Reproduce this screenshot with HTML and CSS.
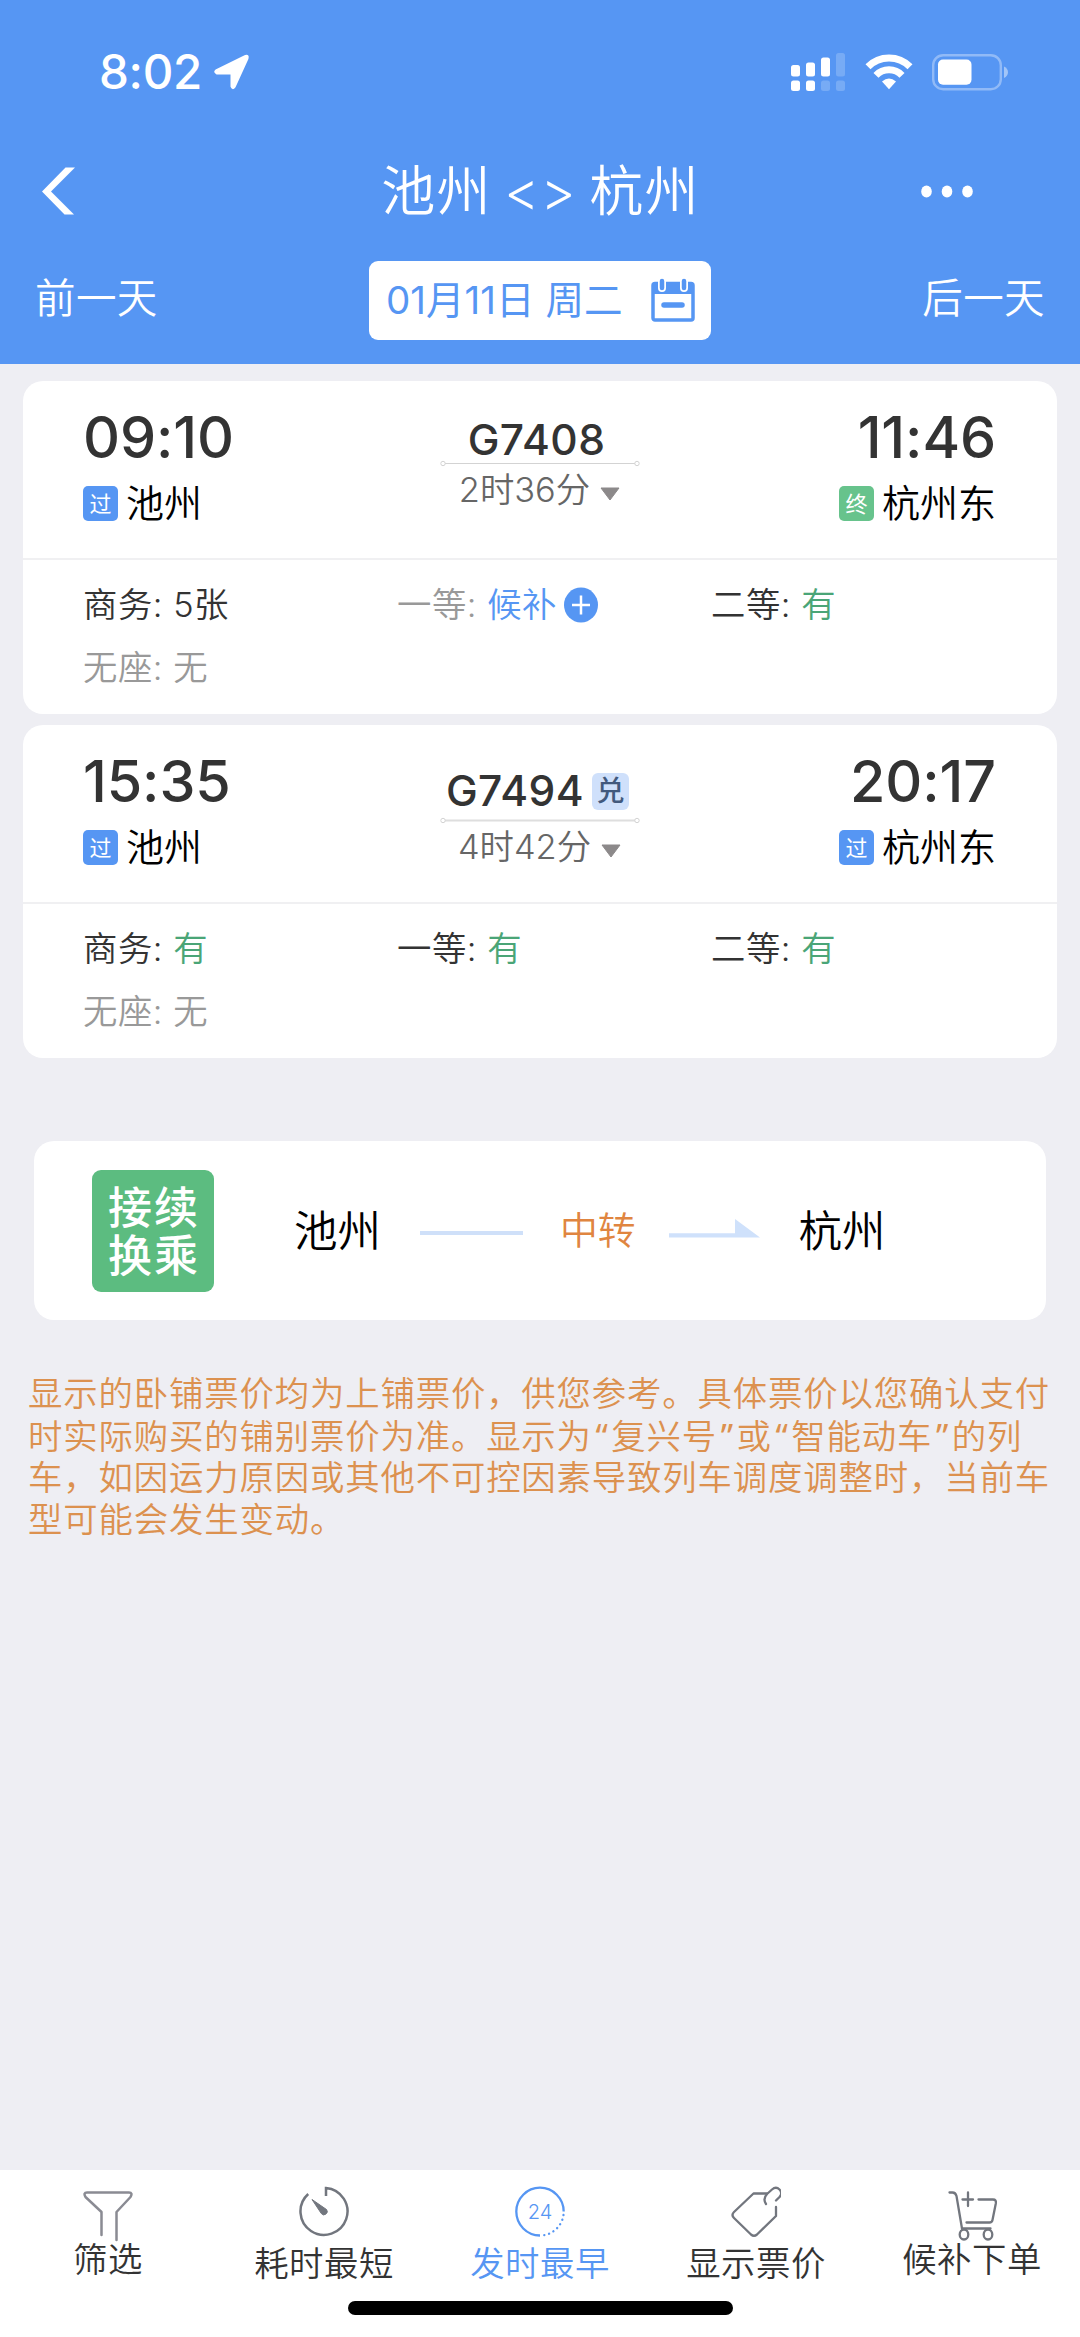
FILE: index.html
```html
<!DOCTYPE html>
<html lang="zh-CN">
<head>
<meta charset="utf-8">
<title>池州 - 杭州</title>
<link rel="stylesheet" href="styles.css">
</head>
<body>
<div class="app">
  <header class="header">
    <div class="status">
      <span class="clock">8:02</span>
      <svg class="locate" width="38" height="38" viewBox="0 0 38 38"><path d="M3 17.5 32.500 3Q35.500 2 34.500 5.500L21.500 34Q19.500 36.500 18.500 33.500V20.500H4Q1 19 3 17.500Z" fill="#fff" stroke="#fff" stroke-width="2" stroke-linejoin="round"/></svg>
      <svg class="signal" width="54" height="38" viewBox="0 0 54 38" fill="#fff"><rect x="0" y="12" width="9" height="11.500" rx="2.500"/><rect x="15" y="9.500" width="9" height="14" rx="2.500"/><rect x="30" y="4.500" width="9" height="19" rx="2.500"/><rect x="45" y="0" width="9" height="23.500" rx="2.500" opacity=".2"/><rect x="0" y="27.500" width="9" height="10.500" rx="2.500"/><rect x="15" y="27.500" width="9" height="10.500" rx="2.500"/><rect x="30" y="27.500" width="9" height="10.500" rx="2.500" opacity=".2"/><rect x="45" y="27.500" width="9" height="10.500" rx="2.500" opacity=".2"/></svg>
      <svg class="wifi" width="48" height="36" viewBox="0 0 48 36"><g fill="none" stroke="#fff" stroke-width="7"><path d="M3 12.800A29.500 29.500 0 0 1 45 12.800"/><path d="M11 21.300A18 18 0 0 1 37 21.300"/></g><path d="M17 27.500Q24 21.500 31 27.500L24 35.200Z" fill="#fff"/></svg>
      <svg class="battery" width="77" height="37" viewBox="0 0 77 37"><rect x="1.200" y="1.200" width="67.600" height="34" rx="10" fill="none" stroke="#fff" stroke-opacity=".35" stroke-width="2.400"/><path d="M72 12.500Q76 14.500 76 18.200T72 24Z" fill="#fff" fill-opacity=".45"/><rect x="6" y="5.500" width="33.500" height="25.300" rx="5" fill="#fff"/></svg>
    </div>
    <div class="titlebar">
      <svg class="back" width="34" height="48" viewBox="0 0 34 48"><path d="M23.500 0.500H33L9 24.500 32 47.500H22.500L0 24.500Z" fill="#fff"/></svg>
      <h1 class="title">池州 &lt;&gt; 杭州</h1>
      <svg class="more" width="52" height="13" viewBox="0 0 52 13" fill="#fff"><ellipse cx="5.500" cy="6.500" rx="5.300" ry="6"/><ellipse cx="26" cy="6.500" rx="5.300" ry="6"/><ellipse cx="46.500" cy="6.500" rx="5.300" ry="6"/></svg>
    </div>
    <div class="datebar">
      <span class="day">前一天</span>
      <div class="date">
        <span class="date-text">01月11日 周二</span>
        <svg width="44" height="44" viewBox="0 0 44 44"><rect x="2" y="5.500" width="40" height="36.500" rx="2" fill="#fff" stroke="#5696f3" stroke-width="3.500"/><path d="M1 5h42v11H1z" fill="#5696f3"/><g stroke-linecap="round"><path d="M11 0v10M33 0v10" stroke="#fff" stroke-width="8"/><path d="M11 3v7M33 3v7" stroke="#5696f3" stroke-width="4.500"/><path d="M13 27h18" stroke="#5696f3" stroke-width="5.500"/></g></svg>
      </div>
      <span class="day day-next">后一天</span>
    </div>
  </header>

  <main class="trains">
    <section class="card">
      <div class="trip">
        <div class="stop">
          <span class="time">09:10</span>
          <span class="station"><i class="tag">过</i>池州</span>
        </div>
        <div class="route">
          <span class="number">G7408</span>
          <svg class="rule" width="200" height="7" viewBox="0 0 200 7"><path d="M5 3.500h190" stroke="#d3d3d3" stroke-width="1.200"/><g fill="#fff" stroke="#d3d3d3"><circle cx="3" cy="3.500" r="2.200"/><circle cx="197" cy="3.500" r="2.200"/></g></svg>
          <span class="duration">2时36分<svg width="20" height="14" viewBox="0 0 20 14"><path d="M1 1h18L10 13Z" fill="#8c898a" stroke="#8c898a" stroke-linejoin="round"/></svg></span>
        </div>
        <div class="stop stop-end">
          <span class="time">11:46</span>
          <span class="station"><i class="tag tag-final">终</i>杭州东</span>
        </div>
      </div>
      <div class="seats">
        <span>商务: 5张</span>
        <span class="muted">一等: <b class="wait">候补</b><svg width="34" height="36" viewBox="0 0 34 36"><ellipse cx="17" cy="18" rx="17" ry="17.500" fill="#5696f3"/><path d="M8 18h18M17 8.500v19" stroke="#fff" stroke-width="2.500"/></svg></span>
        <span>二等: <b class="have">有</b></span>
        <span class="muted">无座: 无</span>
      </div>
    </section>

    <section class="card">
      <div class="trip">
        <div class="stop">
          <span class="time">15:35</span>
          <span class="station"><i class="tag">过</i>池州</span>
        </div>
        <div class="route route-tagged">
          <span class="number">G7494<i class="redeem">兑</i></span>
          <svg class="rule" width="200" height="7" viewBox="0 0 200 7"><path d="M5 3.500h190" stroke="#dedede" stroke-width="2"/><g fill="#fff" stroke="#d3d3d3"><circle cx="3" cy="3.500" r="2.200"/><circle cx="197" cy="3.500" r="2.200"/></g></svg>
          <span class="duration">4时42分<svg width="20" height="14" viewBox="0 0 20 14"><path d="M1 1h18L10 13Z" fill="#8c898a" stroke="#8c898a" stroke-linejoin="round"/></svg></span>
        </div>
        <div class="stop stop-end">
          <span class="time">20:17</span>
          <span class="station"><i class="tag">过</i>杭州东</span>
        </div>
      </div>
      <div class="seats">
        <span>商务: <b class="have">有</b></span>
        <span>一等: <b class="have">有</b></span>
        <span>二等: <b class="have">有</b></span>
        <span class="muted">无座: 无</span>
      </div>
    </section>
  </main>

  <section class="transfer">
    <div class="transfer-logo">接续<br>换乘</div>
    <span class="city">池州</span>
    <span class="leg"></span>
    <span class="via">中转</span>
    <svg class="arrow" width="91" height="19" viewBox="0 0 91 19"><path d="M0 14.200H66V0L91 18.600H0Z" fill="#cfe1fb"/></svg>
    <span class="city">杭州</span>
  </section>

  <p class="note">显示的卧铺票价均为上铺票价，供您参考。具体票价以您确认支付<br>时实际购买的铺别票价为准。显示为<span class="open">“</span>复兴号<span class="close">”</span>或<span class="open">“</span>智能动车<span class="close">”</span>的列<br>车，如因运力原因或其他不可控因素导致列车调度调整时，当前车<br>型可能会发生变动。</p>

  <nav class="tabs">
    <div class="tab tab-tight">
      <svg width="50" height="52" viewBox="0 0 50 52" fill="none" stroke="#8a8b93" stroke-width="2.500" stroke-linecap="round" stroke-linejoin="round"><path d="M18.500 44V21L2.500 6Q0 1.500 4 1.500H46Q50 1.500 47.500 6L33.500 21V49"/></svg>
      <span>筛选</span>
    </div>
    <div class="tab">
      <svg width="50" height="52" viewBox="0 0 50 52" fill="none" stroke="#72767e" stroke-width="2.500"><path d="M9.200 8A23.500 23.500 0 1 0 27 2V10"/><path d="M13 13.500 27.500 23.500A3 3 0 1 1 22.300 27.500Z" fill="#72767e" stroke-width="1"/></svg>
      <span>耗时最短</span>
    </div>
    <div class="tab tab-active">
      <svg width="50" height="52" viewBox="0 0 50 52" fill="none" stroke="#5696f3" stroke-width="2.300"><path d="M25 49.500A23.700 23.900 0 1 1 48.700 25.600"/><path d="M48.500 29A23.700 23.900 0 0 1 27 49.400" stroke-linecap="round" stroke-dasharray=".1 4.800"/><text class="hours" x="25" y="33">24</text></svg>
      <span>发时最早</span>
    </div>
    <div class="tab">
      <svg width="50" height="52" viewBox="0 0 50 52" fill="none" stroke="#72767e" stroke-width="2.300" stroke-linecap="round" stroke-linejoin="round"><path d="M36 7.500H22.500L3 26Q0 29 3 32L20 48.500Q23 51 26 48.500L45 30V21"/><path d="M35 18Q31.500 13 36 8L41 3.500Q45 0 48.500 3.500T48.500 11L45 14.500"/></svg>
      <span>显示票价</span>
    </div>
    <div class="tab tab-tight">
      <svg width="50" height="52" viewBox="-1.500 0 50 52" fill="none" stroke="#72767e" stroke-width="2.300" stroke-linecap="round"><path d="M1 1.500H4Q7 1.500 8 5L13.500 37.500H42M18 31.500H41Q43.500 31.500 44 29L47.300 12.500Q48 8.500 44.500 8.500H30M19.500 1.500V15M14 8.500H24.500"/><ellipse cx="15.500" cy="43.500" rx="4.300" ry="5"/><ellipse cx="39.500" cy="43.500" rx="4.300" ry="5"/></svg>
      <span>候补下单</span>
    </div>
    <div class="home"></div>
  </nav>
</div>
</body>
</html>
```
FILE: styles.css
```css
* {
  box-sizing: border-box;
}

body {
  margin: 0;
  background: #eeeef3;
  color: #333;
  font-family: Inter, "Noto Sans CJK SC", sans-serif;
  font-size: 34.4px;
  font-weight: 350;
  line-height: 1.4;
}

svg {
  display: block;
  flex: none;
}

i,
b {
  font-style: normal;
  font-weight: inherit;
}

.app {
  display: flex;
  flex-direction: column;
  width: 1080px;
  height: 2337px;
}

/* Header */
.header {
  height: 364px;
  background: #5696f3;
  color: #fff;
}

.status {
  display: flex;
  align-items: center;
  height: 144px;
  padding: 0 71px 0 99px;
}

.clock {
  width: 101px;
  font-size: 47.5px;
  font-weight: 500;
  letter-spacing: -.3px;
  white-space: nowrap;
}

.locate {
  margin-left: 13px;
}

.signal {
  margin-left: auto;
}

.wifi {
  margin-left: 20px;
}

.battery {
  margin-left: 19px;
}

.titlebar {
  display: grid;
  grid-template-columns: 1fr auto 1fr;
  align-items: center;
  height: 92px;
  padding: 2px 107px 0 42px;
}

.title {
  margin: 2px 0 0 66px;
  font-size: 54px;
  font-weight: 350;
  letter-spacing: 1.2px;
  word-spacing: -4px;
  line-height: 80px;
  white-space: nowrap;
}

.more {
  justify-self: end;
}

.datebar {
  display: grid;
  grid-template-columns: 1fr 342px 1fr;
  align-items: center;
  height: 128px;
  padding: 0 35px;
}

.day {
  margin-top: -1px;
  font-size: 40.5px;
  letter-spacing: .4px;
}

.day-next {
  text-align: right;
}

.date {
  display: flex;
  align-items: center;
  justify-content: space-between;
  height: 79px;
  padding: 0 16px 0 17px;
  border-radius: 9px;
  background: #fff;
  color: #5696f3;
}

.date-text {
  font-size: 38.6px;
  font-weight: 430;
  white-space: nowrap;
}

/* Train cards */
.trains {
  display: grid;
  gap: 11px;
  padding: 17px 23px 0;
}

.card {
  height: 333px;
  border-radius: 20px;
  background: #fff;
}

.trip {
  display: grid;
  grid-template-columns: 1fr 200px 1fr;
  height: 179px;
  padding: 0 61px 0 60px;
  border-bottom: 2px solid #f0f0f2;
}

.stop {
  display: flex;
  flex-direction: column;
  gap: 12px;
  padding-top: 26px;
}

.stop-end {
  align-items: flex-end;
}

.time {
  font-size: 57.4px;
  font-weight: 470;
  letter-spacing: -.1px;
  line-height: 61px;
}

.station {
  display: flex;
  align-items: center;
  color: #000;
  font-size: 38px;
  line-height: 46px;
}

.tag {
  width: 35px;
  height: 35px;
  margin-right: 8px;
  border-radius: 5px;
  background: #5696f3;
  color: #fff;
  font-size: 22px;
  font-weight: 400;
  line-height: 36px;
  text-align: center;
}

.tag-final {
  background: #67c38c;
}

.route {
  display: flex;
  flex-direction: column;
  align-items: center;
  padding-top: 36px;
}

.number {
  display: flex;
  align-items: center;
  gap: 8px;
  margin-left: -6px;
  color: #333;
  font-size: 42.5px;
  font-weight: 470;
  letter-spacing: .4px;
  line-height: 46px;
}

.redeem {
  width: 37px;
  height: 37px;
  border-radius: 6px;
  background: #cfe0fb;
  color: #42597d;
  font-size: 28px;
  letter-spacing: 0;
  line-height: 37px;
  text-align: center;
}

.rule {
  margin-top: -3px;
}

.duration {
  display: flex;
  align-items: center;
  gap: 10px;
  color: #666;
  line-height: 46px;
}

.duration svg {
  margin-top: 7px;
}

.route-tagged {
  padding-top: 43px;
}

.route-tagged .number {
  margin-left: -4px;
}

.route-tagged .rule {
  margin-top: 3px;
}

.seats {
  display: grid;
  grid-template-columns: repeat(3, 314px);
  grid-auto-rows: 62.5px;
  align-items: center;
  padding: 14px 0 0 60px;
}

.seats span {
  display: flex;
  align-items: center;
  letter-spacing: .5px;
  white-space: pre;
}

.muted {
  color: #999;
}

.wait {
  margin-right: 7px;
  color: #5696f3;
}

.have {
  color: #4aa577;
}

/* Transfer suggestion */
.transfer {
  display: flex;
  align-items: center;
  height: 179px;
  margin: 83px 34px 0;
  padding-left: 58px;
  border-radius: 20px;
  background: #fff;
}

.transfer-logo {
  width: 122px;
  height: 122px;
  margin-right: 80px;
  padding: 14px 0 0 16px;
  border-radius: 9px;
  background: #5cbc80;
  color: #fff;
  font-size: 44px;
  font-weight: 450;
  letter-spacing: 2px;
  line-height: 48px;
}

.city {
  margin-top: 1px;
  color: #000;
  font-size: 43.5px;
}

.leg {
  width: 103px;
  height: 4px;
  margin: 4px 37px 0 39px;
  background: #cfe0f9;
}

.via {
  color: #e08540;
  font-size: 37.8px;
}

.arrow {
  margin: -4px 39px 0 33px;
}

.note {
  margin: 53px 0 0 28px;
  color: #dc914f;
  letter-spacing: .85px;
  line-height: 41.6px;
  white-space: nowrap;
}

.open,
.close {
  display: inline-block;
  width: 19.500px;
  font-family: "Noto Sans", sans-serif;
  font-weight: 400;
  letter-spacing: 0;
  text-align: center;
}

/* Bottom tabs */
.tabs {
  position: relative;
  display: grid;
  grid-template-columns: repeat(5, 1fr);
  height: 167px;
  margin-top: auto;
  background: #fff;
}

.tab {
  display: flex;
  flex-direction: column;
  align-items: center;
  padding-top: 16px;
  letter-spacing: .5px;
  line-height: 48px;
}

.tab span {
  margin-top: 2px;
}

.tab-tight {
  padding-top: 21px;
}

.tab-tight span {
  margin-top: -7px;
}

.tab-active {
  color: #5696f3;
}

.hours {
  fill: #5696f3;
  stroke: none;
  font-size: 20px;
  letter-spacing: 0;
  text-anchor: middle;
}

.home {
  position: absolute;
  bottom: 22px;
  left: 348px;
  width: 385px;
  height: 14px;
  border-radius: 7px;
  background: #000;
}
```
